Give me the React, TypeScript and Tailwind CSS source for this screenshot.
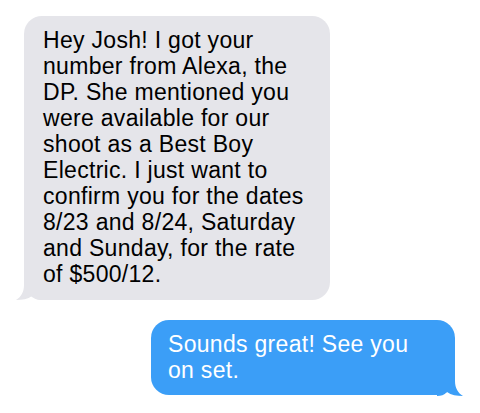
export default function App() {
  return (
    <div
      className="w-[480px] h-[413px] bg-white flex flex-col items-start pt-[16px] pl-[24px] pr-[25px] gap-[20px]"
      style={{ fontFamily: '"Liberation Sans", Arial, sans-serif' }}
    >
      <div className="relative w-[306px] bg-[#e5e5ea] rounded-[18px] pl-[19px] pr-[14px] pt-[11px] pb-[13px] text-[23px] leading-[26px] tracking-[0.3px] text-black">
        Hey Josh! I got your number from Alexa, the DP. She mentioned you were available for our shoot as a Best Boy Electric. I just want to confirm you for the dates 8/23 and 8/24, Saturday and Sunday, for the rate of $500/12.
        <svg
          className="absolute left-[-8px] bottom-0"
          width="26"
          height="20"
          viewBox="0 0 26 20"
        >
          <path
            d="M8,0 L26,0 L26,20 C22,20 19,19 16,16 C12,19 6,20 0,20 C5,17 8,12 8,5 Z"
            fill="#e5e5ea"
          />
        </svg>
      </div>
      <div className="relative self-end w-[304px] bg-[#3b9ef7] rounded-[18px] pl-[17px] pr-[16px] pt-[11px] pb-[12px] text-[23px] leading-[26px] tracking-[0.3px] text-white">
        Sounds great! See you on set.
        <svg
          className="absolute right-[-8px] bottom-[-1px]"
          width="26"
          height="20"
          viewBox="0 0 26 20"
        >
          <path
            d="M18,0 L0,0 L0,20 C4,20 7,19 10,16 C14,19 20,20 26,20 C21,17 18,12 18,5 Z"
            fill="#3b9ef7"
          />
        </svg>
      </div>
    </div>
  );
}
